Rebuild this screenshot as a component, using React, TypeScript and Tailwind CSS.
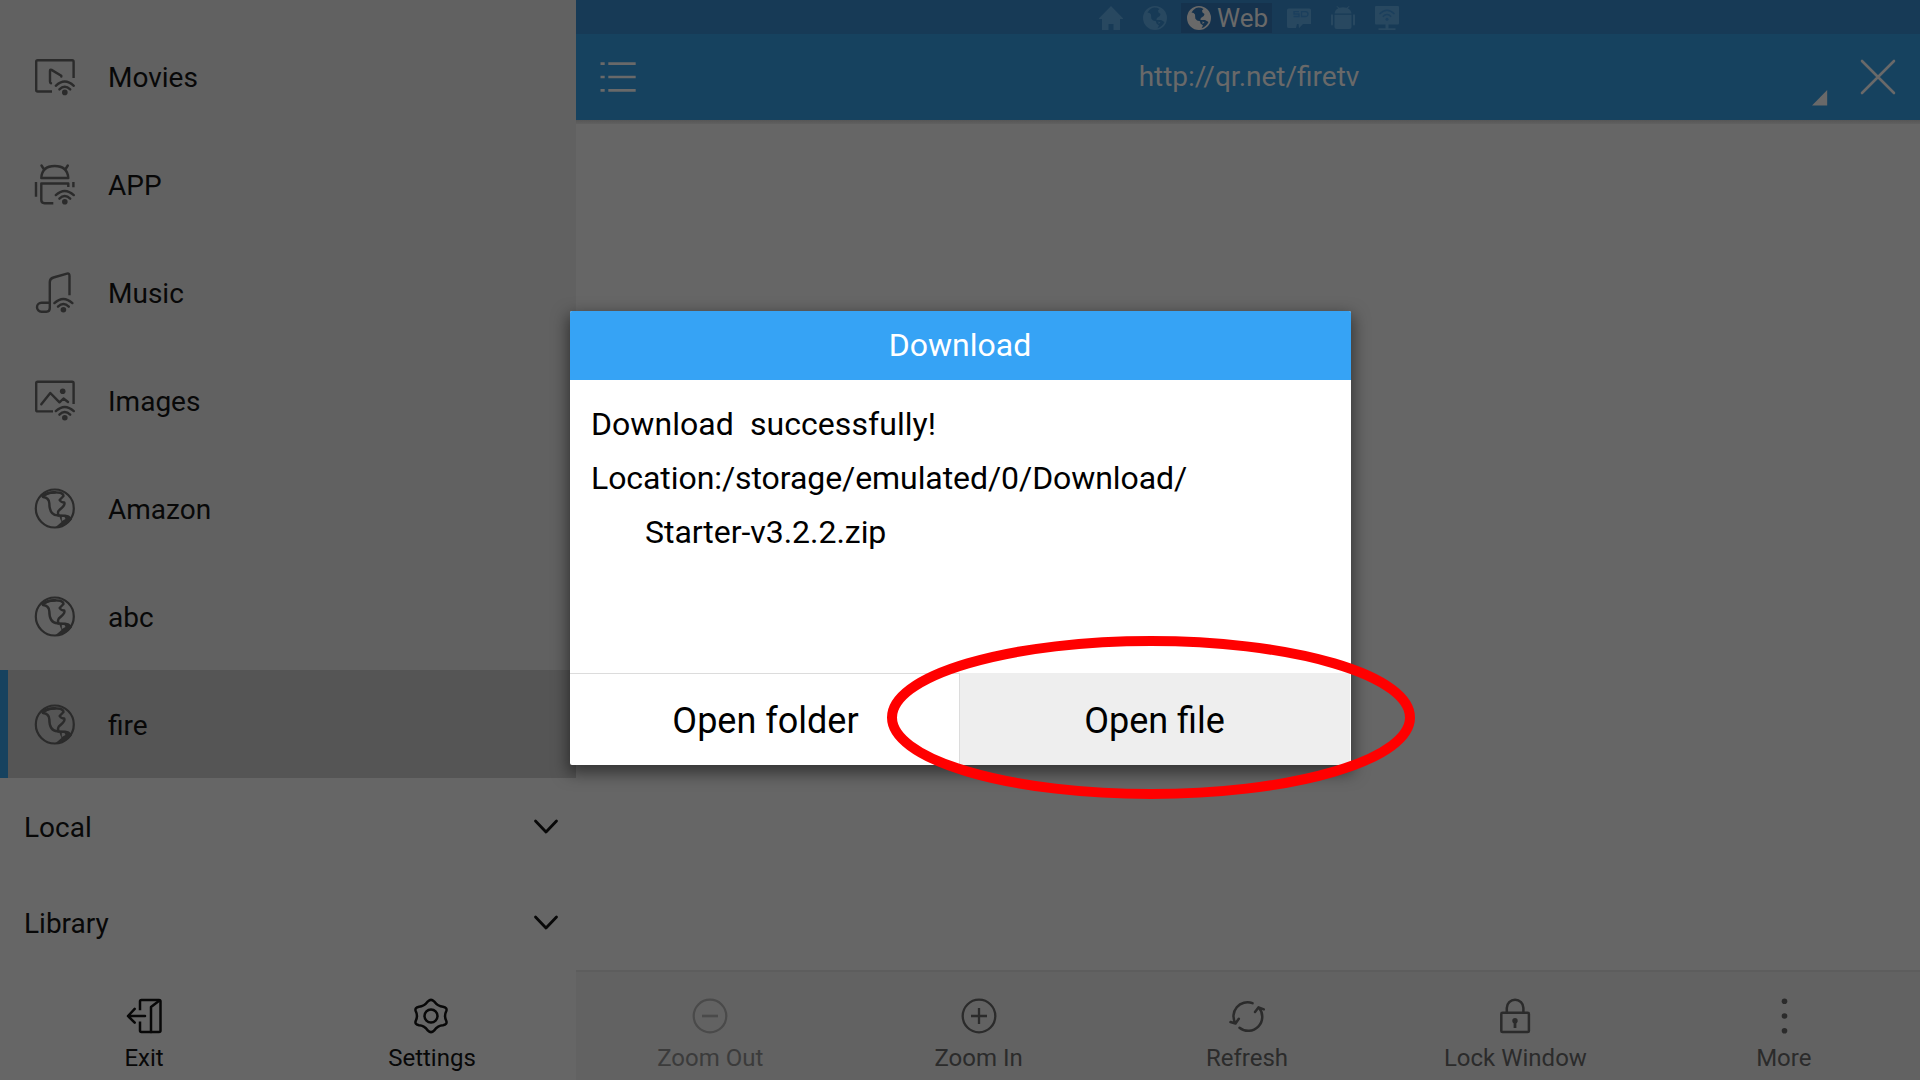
import React from "react";

type IconProps = { className?: string };

const Wifi = ({ x = 0, y = 0 }: { x?: number; y?: number }) => (
  <g transform={`translate(${x} ${y})`}>
    <path d="M20.8 29.8Q29.7 21.4 38.8 29.8" />
    <path d="M24.4 33.4Q29.7 28 35.2 33.4" />
    <circle cx="29.8" cy="36.4" r="2.8" fill="currentColor" stroke="none" />
  </g>
);

const SideIcon = ({ children }: { children: React.ReactNode }) => (
  <svg className="block size-10 shrink-0 overflow-visible" viewBox="0 0 40 40" fill="none" stroke="currentColor" strokeWidth="2.4" strokeLinecap="round" strokeLinejoin="round">
    {children}
  </svg>
);

const MovieIcon = () => (
  <SideIcon>
    <path strokeLinecap="butt" d="M38.6 22V5.700Q38.6 4.200 37.1 4.200H2.700Q1.200 4.200 1.200 5.700V34Q1.200 35.500 2.700 35.500H17" />
    <path d="M26.300 20.500V19.800L16.500 13.900Q15 13.200 15 14.900V25.500Q15 27 16 27.200" />
    <Wifi />
  </SideIcon>
);

const AppIcon = () => (
  <SideIcon>
    <path d="M6.3 14Q7 2 19.700 2T33.300 14ZM6.500 1.500L9 5.500M32.800 1.500L30.300 5.500" />
    <path strokeLinecap="butt" d="M33.300 23V19.500H6.300V36Q6.300 39.200 9.500 39.200H18.300M1 18V32.700M38.400 18V23.300" />
    <Wifi y={1.3} />
  </SideIcon>
);

const MusicIcon = () => (
  <SideIcon>
    <path strokeLinecap="butt" d="M34.500 23.300V4Q34.500 1 32 1.700L18.500 5.500Q14.800 6.500 14.800 10V36Q14.800 39.700 11.300 39.700H6.500A4.500 4.500 0 0 1 6.500 30.700H14.800" />
    <Wifi x={-1.4} y={1.3} />
  </SideIcon>
);

const ImageIcon = () => (
  <SideIcon>
    <path strokeLinecap="butt" d="M38.600 24V3.300Q38.600 1.800 37.100 1.800H2.700Q1.200 1.800 1.200 3.300V29.900Q1.200 31.400 2.700 31.400H18" />
    <path d="M6.300 24.300L15.300 13L24.500 22.300L28.500 18.500L33 22" />
    <circle cx="27.700" cy="11.300" r="2.800" fill="currentColor" stroke="none" />
    <Wifi y={1.3} />
  </SideIcon>
);

const GlobeIcon = () => (
  <SideIcon>
    <g transform="translate(0 .5)">
      <circle cx="19.800" cy="20" r="19" strokeWidth="2.200" />
      <path d="M8 8.500Q14 9.300 14.300 14.500C14.300 18 14.500 26.500 22.500 26.900L30 27.300Q34 28 35 31" />
      <path d="M9.500 6.500Q16 2.800 25.500 4.300Q28.500 5.500 28.500 7.500L24.600 11.500Q26 14 29.300 14C31 17.500 24.500 20.500 23.500 22.500Q22.500 24 23.500 27" />
      <path d="M7.500 7.500Q13 3.500 20 3.800" strokeWidth="2.800" />
      <path fillRule="evenodd" stroke="none" fill="currentColor" d="M24 27L34 27L37 30.500Q31 38.500 19.500 39.500L26.500 33.500ZM26.800 28.500V32.500L30.500 30.500L29.500 28.500Z" />
    </g>
  </SideIcon>
);

const ToolIcon = ({ children, width = 2.5 }: { children: React.ReactNode; width?: number }) => (
  <svg className="block size-9 overflow-visible" viewBox="0 0 36 36" fill="none" stroke="currentColor" strokeWidth={width} strokeLinecap="round" strokeLinejoin="round">
    {children}
  </svg>
);

const ExitIcon = () => (
  <ToolIcon>
    <path strokeLinecap="butt" d="M14 12.300V3.500Q14 2 15.500 2H33Q34.500 2 34.500 3.500V32.500Q34.500 34 33 34H15.500Q14 34 14 32.500V23.500" />
    <path d="M33.500 2.500L25 9V34M19 18H2M8.700 10.800L2 18L8.700 24.700" />
  </ToolIcon>
);

const GearIcon = () => (
  <ToolIcon>
    <path d="M14 3.300Q17 .3 20 3.300Q24 8.600 29 8.700Q33.500 9.500 32.300 13Q29.800 18 32.300 23Q33.500 26.500 29 27.300Q24 27.400 20 32.700Q17 35.700 14 32.700Q10 27.400 5 27.300Q.5 26.500 1.700 23Q4.200 18 1.700 13Q.5 9.500 5 8.700Q10 8.600 14 3.300Z" />
    <circle cx="17" cy="18" r="6.500" />
  </ToolIcon>
);

const ZoomOutIcon = () => (
  <ToolIcon width={2.2}>
    <circle cx="18" cy="18" r="16.300" />
    <path strokeLinecap="butt" strokeWidth="2.600" d="M10 18H26" />
  </ToolIcon>
);

const ZoomInIcon = () => (
  <ToolIcon width={2.300}>
    <circle cx="18" cy="18" r="16.300" />
    <path strokeLinecap="butt" d="M10 18H26M18 10V26" />
  </ToolIcon>
);

const RefreshIcon = () => (
  <ToolIcon>
    <path d="M6.500 25.500A14 14 0 0 1 23.500 5.200M10.500 29.700A14 14 0 0 0 30 9.800M1.500 24L6.500 25.500L9.800 20.800M26 14L29.600 9.300L34.800 11.300" />
  </ToolIcon>
);

const LockIcon = () => (
  <ToolIcon>
    <rect x="4.300" y="14.700" width="27.600" height="19.400" rx="1.200" />
    <path d="M9.800 14V10A8.300 8.300 0 0 1 26.400 10V14" />
    <circle cx="18" cy="22.800" r="2.700" fill="currentColor" stroke="none" />
    <path strokeLinecap="butt" strokeWidth="2.800" d="M18 23V30" />
  </ToolIcon>
);

const MoreIcon = () => (
  <ToolIcon>
    <g fill="currentColor" stroke="none">
      <circle cx="18.500" cy="3.300" r="2.800" />
      <circle cx="18.500" cy="18" r="2.800" />
      <circle cx="18.500" cy="32.700" r="2.800" />
    </g>
  </ToolIcon>
);

const HomeTab = ({ className }: IconProps) => (
  <svg className={className} viewBox="0 0 24 24" fill="currentColor">
    <path d="M12 0L24 12.200V13H21V24H14.500V18H9.500V24H3V13H0V12.200Z" />
  </svg>
);

const GlobeTab = ({ className }: IconProps) => (
  <svg className={className} viewBox="0 0 24 24" fill="currentColor">
    <path
      fillRule="evenodd"
      d="M12 0A12 12 0 1 1 12 24A12 12 0 1 1 12 0ZM9 2Q12.500 .8 16.500 3L15 4.500L15.500 6.500L17.500 8Q17.500 10 14.500 11.500Q13 12.500 13.500 14H18L21.500 16Q19.500 20.500 14.500 22.300L16 19.500L13.500 17.500L13 15.300Q9.500 15 8.300 12.500L8 8.500Q7 6.500 4.500 6.500Q6 3.500 9 2ZM15.500 15.500V18L17.500 16.500Z"
    />
  </svg>
);

const SdTab = ({ className }: IconProps) => (
  <svg className={className} viewBox="0 0 24 24" fill="currentColor">
    <path d="M1.500 2.500H22.500Q24 2.500 24 4V18H16L12 22.200L11.500 18H10L9 22H1.500Q0 22 0 20.500V4Q0 2.500 1.500 2.500Z" />
    <path d="M12 5.700H7V8H12V10.500H6.500M14.500 5.700H18.500Q21 5.700 21 8.100T18.500 10.500H14.500Z" fill="none" stroke="#1b3f5d" strokeWidth="1.300" />
  </svg>
);

const AndroidTab = ({ className }: IconProps) => (
  <svg className={className} viewBox="0 0 24 24" fill="currentColor">
    <path d="M3.500 7.500Q4 3.800 7.200 2.300L5.300.3L6 0L8.300 1.700Q12 .6 15.700 1.700L18 0L18.700.3L16.800 2.300Q20 3.800 20.500 7.500ZM3.500 8.700H20.500V21Q20.500 23 18.500 23H5.500Q3.500 23 3.500 21ZM0 9.300Q0 8.300 1 8.300T2 9.300V18.500Q2 19.500 1 19.500T0 18.500ZM22 9.300Q22 8.300 23 8.300T24 9.300V18.500Q24 19.500 23 19.500T22 18.500Z" />
  </svg>
);

const CastTab = ({ className }: IconProps) => (
  <svg className={className} viewBox="0 0 24 24" fill="currentColor">
    <path d="M1 0H23Q24 0 24 1V17.500Q24 18.500 23 18.500H1Q0 18.500 0 17.500V1Q0 0 1 0ZM10.500 18.500H13.500V22.300H20.500V24H3.500V22.300H10.500Z" />
    <g fill="none" stroke="#1b3f5d" strokeWidth="1.400">
      <path d="M4.500 8Q12 .5 19.500 8M7.800 10.800Q12 6.300 16.200 10.800" />
      <circle cx="12" cy="13.300" r="1.500" fill="#1b3f5d" stroke="none" />
    </g>
  </svg>
);

const links = [
  { label: "Movies", Icon: MovieIcon },
  { label: "APP", Icon: AppIcon },
  { label: "Music", Icon: MusicIcon },
  { label: "Images", Icon: ImageIcon },
  { label: "Amazon", Icon: GlobeIcon },
  { label: "abc", Icon: GlobeIcon },
  { label: "fire", Icon: GlobeIcon, active: true },
];

const tools = [
  { label: "Zoom Out", Icon: ZoomOutIcon, disabled: true },
  { label: "Zoom In", Icon: ZoomInIcon },
  { label: "Refresh", Icon: RefreshIcon },
  { label: "Lock Window", Icon: LockIcon },
  { label: "More", Icon: MoreIcon },
];

function Sidebar() {
  return (
    <aside className="flex w-[576px] shrink-0 flex-col bg-[#666666] text-[#080808]">
      <nav className="bg-[#616161] pt-[22px] text-[28px]">
        {links.map(({ label, Icon, active }) => (
          <div key={label} className={active ? "flex h-[108px] items-center border-l-8 border-[#16425f] bg-[#555555] pl-[27px]" : "flex h-[108px] items-center pl-[35px]"}>
            <span className="text-[#2b2b2b]">
              <Icon />
            </span>
            <span className="ml-[33px] pt-[3px]">{label}</span>
          </div>
        ))}
      </nav>
      {["Local", "Library"].map((label) => (
        <div key={label} className="flex h-24 items-center justify-between pr-[18px] pl-6 text-[28px]">
          <span className="pt-[3px]">{label}</span>
          <svg className="mt-px h-[14px] w-6 overflow-visible" viewBox="0 0 24 14" fill="none" stroke="currentColor" strokeWidth="2.800" strokeLinecap="round" strokeLinejoin="round">
            <path d="M1.500 1L12 12L22.500 1" />
          </svg>
        </div>
      ))}
      <div className="grid grid-cols-2 pt-[28px] text-2xl">
        <div className="flex flex-col items-center gap-[10px]">
          <ExitIcon />
          <span className="leading-7">Exit</span>
        </div>
        <div className="flex flex-col items-center gap-[10px]">
          <GearIcon />
          <span className="leading-7">Settings</span>
        </div>
      </div>
    </aside>
  );
}

function TabStrip() {
  return (
    <div className="flex h-[34px] items-center bg-[#173a56] pt-px pl-[523px] text-[#284860]">
      <HomeTab className="size-6" />
      <GlobeTab className="ml-5 size-6" />
      <div className="ml-[14px] flex h-[30px] items-center bg-[#15324d] pr-1 pl-[6px] text-[#696969]">
        <GlobeTab className="size-6" />
        <span className="ml-[6px] text-[26px] leading-[30px]">Web</span>
      </div>
      <SdTab className="ml-[15px] size-6" />
      <AndroidTab className="ml-5 size-6" />
      <CastTab className="ml-5 size-6" />
    </div>
  );
}

function AddressBar() {
  return (
    <header className="flex h-[86px] items-center justify-between bg-[#16425f] pr-6 pl-6 text-[#696969]">
      <svg className="h-[30px] w-9" viewBox="0 0 36 30" stroke="currentColor" strokeWidth="2.600">
        <path d="M.5 1.600H4.700M8.300 1.600H35.700M.5 15H4.700M8.300 15H35.700M.5 28.400H4.700M8.300 28.400H35.700" />
      </svg>
      <span className="ml-[50px] text-[28px]">http://qr.net/firetv</span>
      <div className="flex items-center gap-8">
        <svg className="mt-[42px] size-4" viewBox="0 0 16 16" fill="currentColor">
          <path d="M15.200 0V15.500H0Z" />
        </svg>
        <svg className="size-9" viewBox="0 0 36 36" stroke="currentColor" strokeWidth="2.600" strokeLinecap="round">
          <path d="M2 2L34 34M34 2L2 34" />
        </svg>
      </div>
    </header>
  );
}

function Browser() {
  return (
    <main className="flex min-w-0 flex-1 flex-col bg-[#666666]">
      <TabStrip />
      <AddressBar />
      <div className="h-1 bg-linear-to-b from-[#565656] to-[#606060]" />
      <div className="flex-1" />
      <div className="h-[2px] bg-[#5d5d5d]" />
      <footer className="grid h-[108px] grid-cols-5 bg-[#626262] pt-[26px] pr-[2px] text-2xl text-[#2b2b2b]">
        {tools.map(({ label, Icon, disabled }) => (
          <div key={label} className="flex flex-col items-center gap-[10px]">
            <span className={disabled ? "text-[#4a4a4a]" : ""}>
              <Icon />
            </span>
            <span className={disabled ? "leading-7 text-[#3b3b3b]" : "leading-7"}>{label}</span>
          </div>
        ))}
      </footer>
    </main>
  );
}

function DownloadDialog() {
  return (
    <div className="absolute top-[311px] left-[570px] flex h-[454px] w-[781px] flex-col rounded-xs bg-white text-[32px] text-black shadow-[0_6px_16px_2px_rgba(0,0,0,0.5)]">
      <h1 className="flex h-[69px] items-center justify-center rounded-t-xs bg-[#36a3f5] pr-px pb-[2px] text-white">Download</h1>
      <div className="flex-1 pt-[17px] pl-[21px] leading-[54px]">
        <p className="tracking-[0.06px] whitespace-pre">{"Download  successfully!"}</p>
        <p className="tracking-[-0.07px]">Location:/storage/emulated/0/Download/</p>
        <p className="pl-[54px] tracking-[-0.04px]">Starter-v3.2.2.zip</p>
      </div>
      <div className="flex h-[92px] text-[36px]">
        <button className="flex w-[390px] items-center justify-center border-t border-r border-[#dcdcdc] pt-[2px] pl-[2px]">Open folder</button>
        <button className="mr-px flex flex-1 items-center justify-center bg-[#eeeeee] pt-[3px] pr-px">Open file</button>
      </div>
      <svg className="pointer-events-none absolute top-[325px] left-[316px] h-[164px] w-[530px]" viewBox="0 0 530 164" fill="none">
        <ellipse cx="265" cy="81.500" rx="259" ry="76.500" stroke="#ff0000" strokeWidth="10" />
      </svg>
    </div>
  );
}

export default function App() {
  return (
    <div className="relative flex h-[1080px] w-[1920px] overflow-hidden font-['Roboto',sans-serif]">
      <Sidebar />
      <Browser />
      <DownloadDialog />
    </div>
  );
}
